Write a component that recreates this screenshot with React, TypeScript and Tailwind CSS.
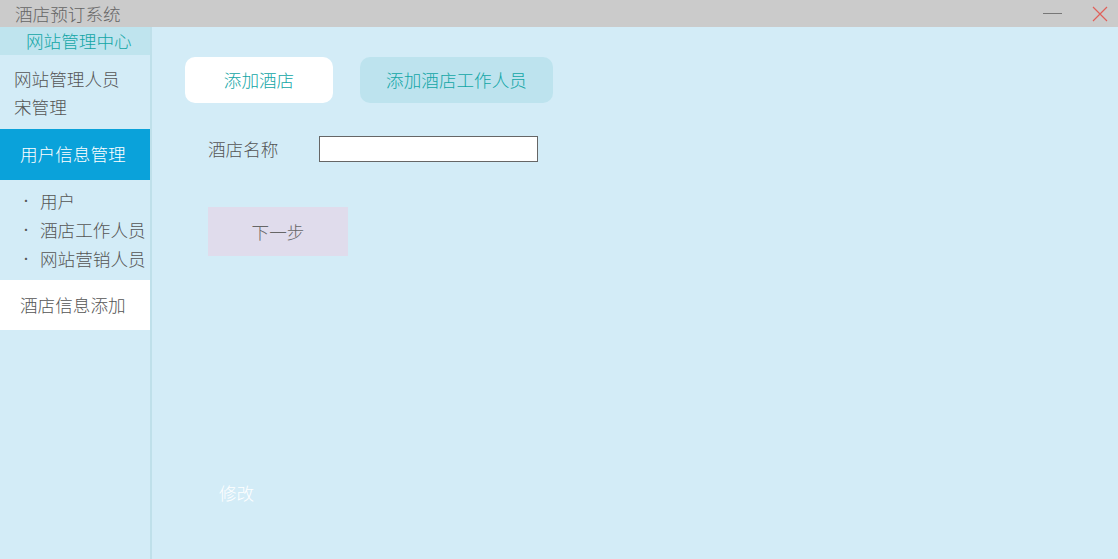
import React from "react";

const font = { fontFamily: '"Noto Sans CJK SC", "Noto Sans", sans-serif' };

export default function App() {
  return (
    <div className="w-[1118px] h-[559px] flex flex-col bg-[#d3ecf7] overflow-hidden font-light" style={font}>
      {/* title bar */}
      <div className="h-[27px] flex items-center justify-between bg-[#cbcbcb] pl-[15px] pr-[10px] shrink-0">
        <span className="text-[17.6px] leading-none text-[#666] pt-[1px]">酒店预订系统</span>
        <div className="flex items-center gap-[30px]">
          <div className="w-[19px] h-px bg-[#777]" />
          <svg width="16" height="16" viewBox="0 0 16 16" stroke="#e0605a" strokeWidth="1.2" fill="none">
            <path d="M1 1 L15 15 M15 1 L1 15" />
          </svg>
        </div>
      </div>

      <div className="flex flex-1 min-h-0">
        {/* sidebar */}
        <aside className="w-[152px] shrink-0 flex flex-col border-r-2 border-[#bfe0ea]">
          <div className="h-[28px] bg-[#bfe4ee] text-[#12a6a6] text-[17.6px] leading-[28px] pl-[26px]">网站管理中心</div>
          <div className="text-[17.6px] leading-[28px] text-[#555] pl-[14px] pt-[10px] pb-[8px]">
            <div>网站管理人员</div>
            <div>宋管理</div>
          </div>
          <div className="h-[51px] bg-[#0aa2da] text-white text-[17.6px] flex items-center pl-[20px]">用户信息管理</div>
          <ul className="text-[17.6px] text-[#555] pl-[20px] pt-[6px] pb-[7px] leading-[29px] whitespace-nowrap">
            <li className="flex items-center"><span className="w-[20px] text-[12px]">·</span><span>用户</span></li>
            <li className="flex items-center"><span className="w-[20px] text-[12px]">·</span><span>酒店工作人员</span></li>
            <li className="flex items-center"><span className="w-[20px] text-[12px]">·</span><span>网站营销人员</span></li>
          </ul>
          <div className="h-[50px] bg-white text-[17.6px] text-[#555] flex items-center pl-[20px]">酒店信息添加</div>
        </aside>

        {/* main */}
        <main className="flex-1 flex flex-col pl-[33px] pt-[30px]">
          <div className="flex gap-[27px]">
            <button className="w-[148px] h-[46px] rounded-[10px] bg-white text-[#12a6a6] text-[17.6px]">添加酒店</button>
            <button className="w-[193px] h-[46px] rounded-[10px] bg-[#bde3ee] text-[#12a6a6] text-[17.6px]">添加酒店工作人员</button>
          </div>
          <div className="flex items-center mt-[33px] pl-[23px]">
            <span className="w-[111px] text-[17.6px] text-[#555]">酒店名称</span>
            <input className="w-[219px] h-[26px] bg-white border border-[#666] outline-none" />
          </div>
          <button className="mt-[45px] ml-[23px] w-[140px] h-[49px] bg-[#e0dcec] text-[#666] text-[17.6px]">下一步</button>
          <div className="mt-auto mb-[53px] pl-[34px] text-[17.6px] text-white">修改</div>
        </main>
      </div>
    </div>
  );
}
